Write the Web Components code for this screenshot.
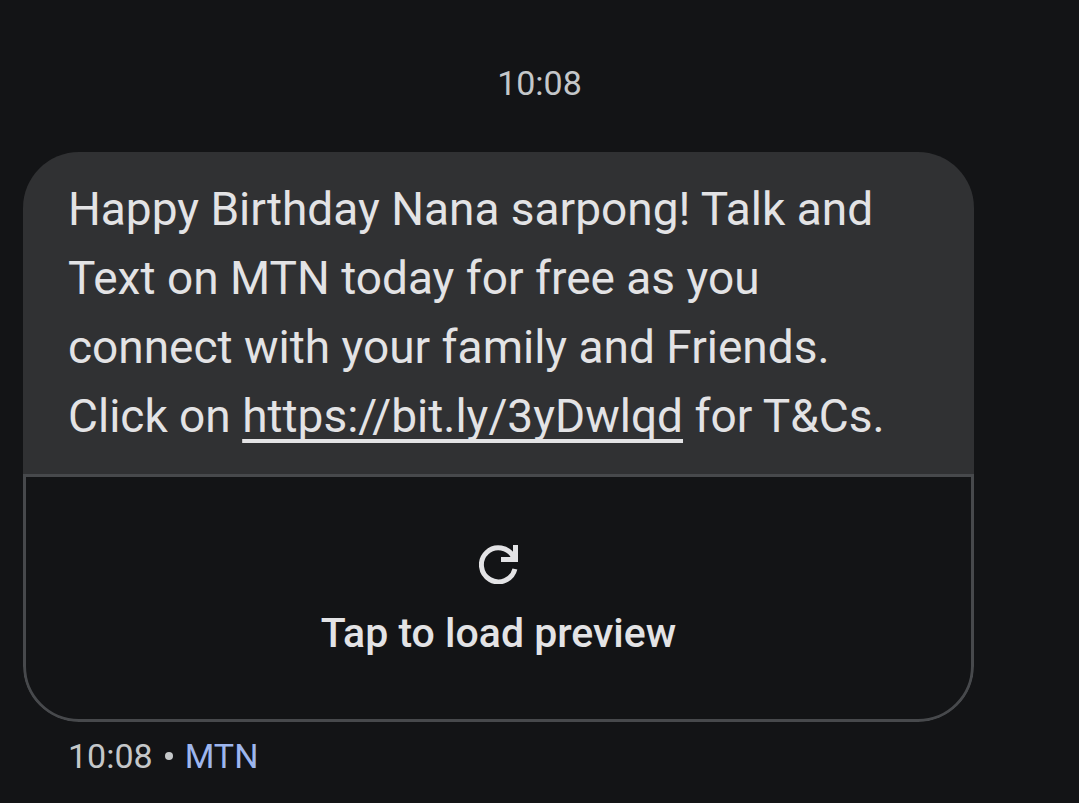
<!DOCTYPE html>
<html lang="en">
<head>
<meta charset="utf-8">
<meta name="viewport" content="width=device-width">
<title>Messages</title>
<style>
body {
	margin: 0;
	background: #131416;
	color: #e3e3e5;
	font-family: Roboto, "Liberation Sans", sans-serif;

	--bubble-color: #303133;
	--outline-color: #47494c;
	--muted-color: #c4c7c9;
	--accent-color: #9db6ee;
}
</style>
</head>
<body>
<message-thread>
	<time-divider slot="divider">10:08</time-divider>
	<message-bubble>
		Happy Birthday Nana sarpong! Talk and Text on MTN today for free as you connect with your family and Friends. Click on <message-link href="https://bit.ly/3yDwlqd">https://bit.ly/3yDwlqd</message-link> for T&amp;Cs.
		<link-preview slot="preview">Tap to load preview</link-preview>
	</message-bubble>
	<message-meta>10:08<span slot="sender">MTN</span></message-meta>
</message-thread>

<script>
function attachTemplate(element, html) {
	const template = document.createElement('template');
	template.innerHTML = html;
	element.attachShadow({mode: 'open'}).append(template.content.cloneNode(true));
}

class MessageThread extends HTMLElement {
	constructor() {
		super();
		attachTemplate(this, `
<style>
:host {
	display: block;
	padding: 63px 0 24px;
}
main {
	display: flex;
	flex-direction: column;
	gap: 14px;
	margin: 49px 105px 0 23px;
}
</style>
<slot name="divider"></slot>
<main><slot></slot></main>`);
	}
}

class TimeDivider extends HTMLElement {
	constructor() {
		super();
		attachTemplate(this, `
<style>
:host {
	display: block;
	color: var(--muted-color);
	font-size: 34px;
	line-height: 40px;
	text-align: center;
}
</style>
<time><slot></slot></time>`);
	}
}

class MessageBubble extends HTMLElement {
	constructor() {
		super();
		attachTemplate(this, `
<style>
:host {
	display: block;
	border-radius: 56px;
	overflow: hidden;
}
p {
	margin: 0;
	padding: 23px 45px;
	background: var(--bubble-color);
	font-size: 46px;
	line-height: 69px;
}
</style>
<p><slot></slot></p>
<slot name="preview"></slot>`);
	}
}

class MessageLink extends HTMLElement {
	constructor() {
		super();
		attachTemplate(this, `
<style>
:host {
	display: inline;
}
a {
	color: inherit;
	text-decoration: underline 4px;
	text-decoration-skip-ink: none;
	text-underline-offset: 7px;
}
</style>
<a><slot></slot></a>`);
		this.shadowRoot.querySelector('a').href = this.getAttribute('href');
	}
}

class LinkPreview extends HTMLElement {
	constructor() {
		super();
		attachTemplate(this, `
<style>
:host {
	display: block;
}
button {
	display: flex;
	flex-direction: column;
	align-items: center;
	gap: 25px;
	box-sizing: border-box;
	width: 100%;
	margin: 0;
	padding: 68px 45px 62px;
	border: 3px solid var(--outline-color);
	border-radius: 0 0 56px 56px;
	background: none;
	color: inherit;
	font: 500 41px/48px Roboto, "Liberation Sans", sans-serif;
	cursor: pointer;
}
svg {
	width: 39px;
	height: 39px;
	fill: none;
	stroke: currentColor;
	stroke-width: 5;
}
</style>
<button type="button">
	<svg viewBox="0 0 39 39" aria-hidden="true">
		<path d="M35.9 24A17 17 0 1 1 34.5 12" />
		<path d="M22 14.5H36.5V0" />
	</svg>
	<span><slot></slot></span>
</button>`);
	}
}

class MessageMeta extends HTMLElement {
	constructor() {
		super();
		attachTemplate(this, `
<style>
:host {
	display: flex;
	align-items: center;
	gap: 12px;
	padding: 0 45px;
	color: var(--muted-color);
	font-size: 34px;
	line-height: 40px;
}
i {
	width: 8px;
	height: 8px;
	border-radius: 50%;
	background: currentColor;
}
.sender {
	color: var(--accent-color);
}
</style>
<time><slot></slot></time>
<i></i>
<span class="sender"><slot name="sender"></slot></span>`);
	}
}

window.customElements.define('message-thread', MessageThread);
window.customElements.define('time-divider', TimeDivider);
window.customElements.define('message-bubble', MessageBubble);
window.customElements.define('message-link', MessageLink);
window.customElements.define('link-preview', LinkPreview);
window.customElements.define('message-meta', MessageMeta);
</script>
</body>
</html>
